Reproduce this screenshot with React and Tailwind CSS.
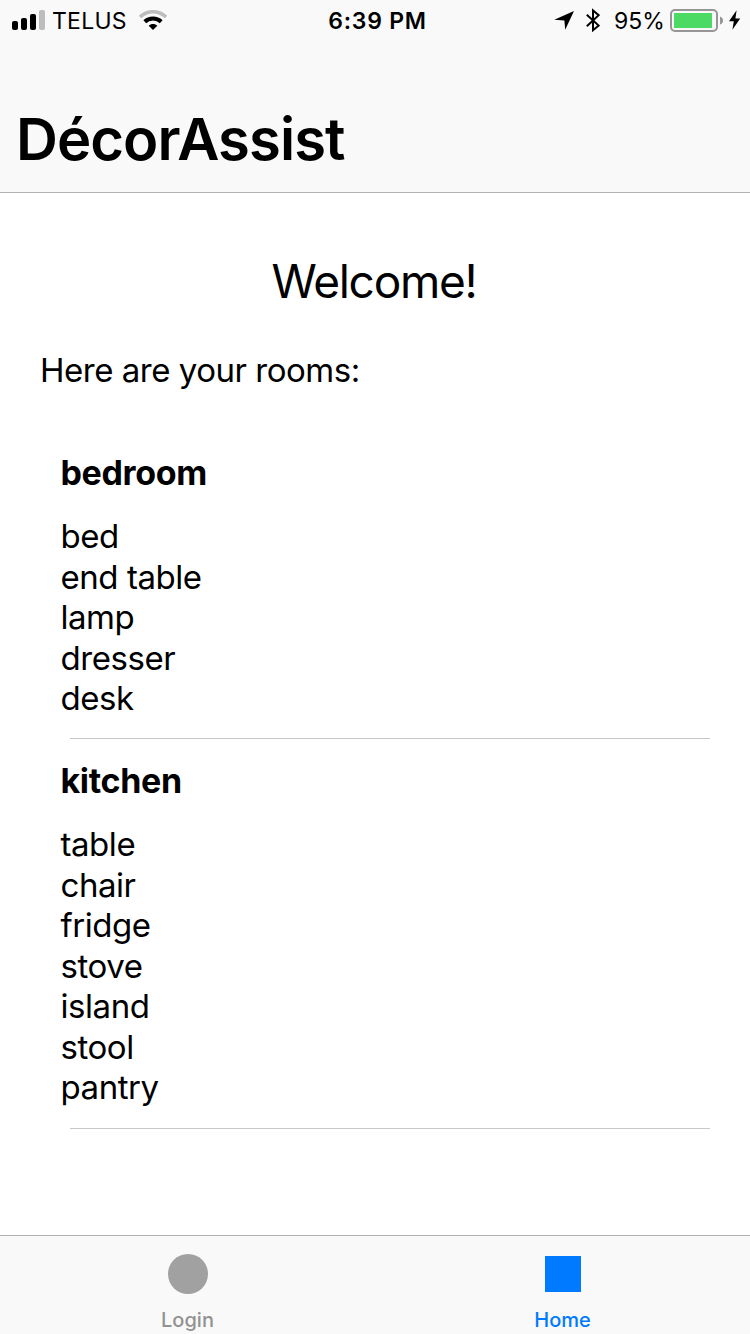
const rooms = [
  { name: 'bedroom', items: ['bed', 'end table', 'lamp', 'dresser', 'desk'] },
  { name: 'kitchen', items: ['table', 'chair', 'fridge', 'stove', 'island', 'stool', 'pantry'] },
];

function SignalIcon() {
  return (
    <svg width="33" height="20" viewBox="0 0 33 20" className="shrink-0">
      <rect x="0" y="11" width="6" height="9" rx="2" />
      <rect x="9" y="8" width="6" height="12" rx="2" />
      <rect x="18" y="4" width="6" height="16" rx="2" />
      <rect x="27" y="0" width="6" height="20" rx="2" fill="#bdbdbd" />
    </svg>
  );
}

function WifiIcon() {
  return (
    <svg width="28" height="20" viewBox="0 0 28 20" fill="none" className="shrink-0">
      <path d="M1 7C8.5 0 19.5 0 27 7" stroke="#bdbdbd" strokeWidth="3.6" />
      <path d="M5.8 11.8C10.3 7.5 17.7 7.5 22.2 11.8" stroke="#000" strokeWidth="4" />
      <path d="M9.7 15.8C12 13.3 16 13.3 18.3 15.8L14 20Z" fill="#000" />
    </svg>
  );
}

function StatusBar() {
  return (
    <div className="grid h-10 grid-cols-3 items-center text-[23px]">
      <div className="flex items-center pl-3">
        <SignalIcon />
        <span className="mt-0.5 ml-[7px] w-[79px] tracking-[0.25px]">TELUS</span>
        <span className="ml-2">
          <WifiIcon />
        </span>
      </div>
      <div className="pt-0.5 pl-[5px] text-center font-semibold tracking-[0.75px]">6:39 PM</div>
      <div className="flex items-center justify-end pr-[9px]">
        <svg width="20" height="20" viewBox="0 0 20 20" className="shrink-0">
          <path d="M20 1L0.3 9.8L10.4 10.4L11.2 19.8Z" />
        </svg>
        <svg width="14" height="24" viewBox="0 0 14 24" fill="none" stroke="#000" strokeWidth="2" className="ml-[12px] shrink-0">
          <path d="M0.8 6.7L12.7 17.6L7 22.2V2.4L12.7 7.2L0.8 18.2" />
        </svg>
        <span className="mt-0.5 ml-[14px] w-[50px]">95%</span>
        <svg width="53" height="24" viewBox="0 0 53 24" className="ml-[6px] shrink-0">
          <rect x="1" y="2" width="46" height="21" rx="4" fill="none" stroke="#969696" strokeWidth="2" />
          <rect x="4" y="5" width="38" height="15" fill="#4cd964" />
          <path d="M50 8.5Q53 9.5 53 12.5Q53 15.5 50 16.5Z" fill="#969696" />
        </svg>
        <svg width="12" height="20" viewBox="0 0 12 20" className="ml-[6px] shrink-0">
          <path d="M7.6 0.3L0 11.3H4.8L3.4 19.8L11.2 8.4H6.4Z" />
        </svg>
      </div>
    </div>
  );
}

function Room({ room }) {
  return (
    <section className="group pt-[21px]">
      <h2 className="h-16 pl-[0.5px] text-[34px] leading-[42px] font-bold tracking-[-0.35px]">{room.name}</h2>
      <ul className="pb-[19.5px] pl-[0.5px] group-last:pb-[20.5px]">
        {room.items.map((item) => (
          <li key={item} className="text-[33px] leading-[40.5px] tracking-[-0.45px]">
            {item}
          </li>
        ))}
      </ul>
      <div className="ml-2.5 h-px bg-[#c8c7cc]" />
    </section>
  );
}

export default function App() {
  return (
    <div className="flex h-[1334px] w-[750px] flex-col overflow-hidden bg-white font-['Inter',sans-serif] text-black">
      <header className="h-[193px] shrink-0 border-b border-[#b2b2b2] bg-[#f9f9f9]">
        <StatusBar />
        <h1 className="pt-[62.5px] pl-[16px] text-[58px] leading-[73px] font-semibold tracking-[-0.95px]">DécorAssist</h1>
      </header>
      <main className="flex-1">
        <p className="pt-[60px] pr-[2px] text-center text-[46px] leading-[56px] tracking-[-1.25px]">Welcome!</p>
        <p className="pt-[41px] pl-[40px] text-[33px] leading-[40px] tracking-[-0.48px]">Here are your rooms:</p>
        <div className="mt-[41px] pr-10 pl-[60px]">
          {rooms.map((room) => (
            <Room key={room.name} room={room} />
          ))}
        </div>
      </main>
      <nav className="grid h-[99px] shrink-0 grid-cols-2 border-t border-[#b2b2b2] bg-[#f9f9f9] text-[20px] font-medium">
        <div className="flex flex-col items-center pt-[18px] text-[#929292]">
          <div className="size-10 rounded-full bg-[#a1a1a1]" />
          <span className="mt-[14px] leading-6">Login</span>
        </div>
        <div className="flex flex-col items-center pt-5 text-[#007aff]">
          <div className="size-9 bg-[#007aff]" />
          <span className="mt-4 leading-6">Home</span>
        </div>
      </nav>
    </div>
  );
}
